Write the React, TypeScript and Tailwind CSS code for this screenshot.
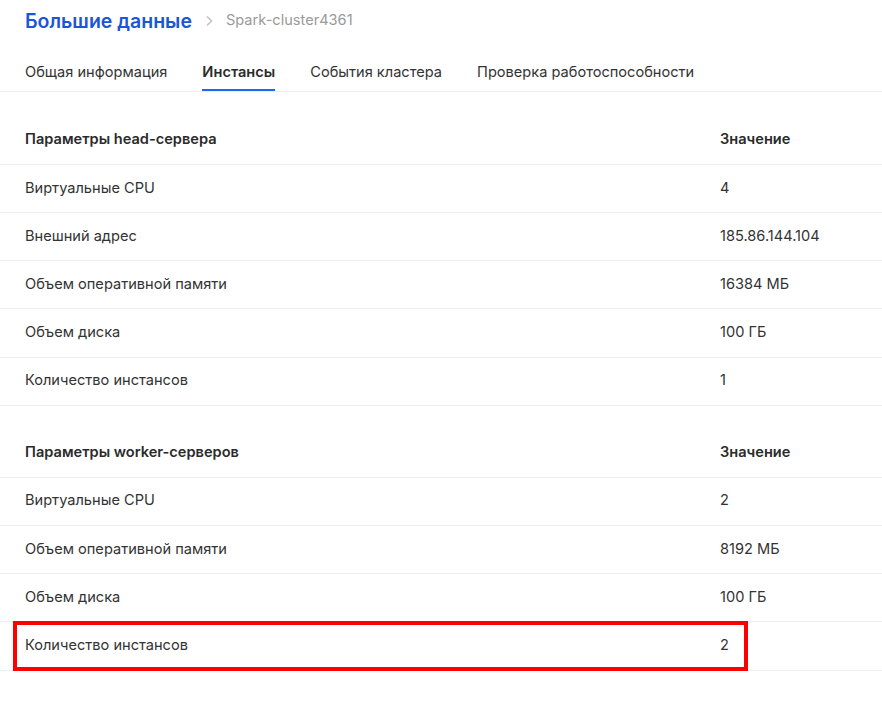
const headRows: ReadonlyArray<[string, string]> = [
  ["Виртуальные CPU", "4"],
  ["Внешний адрес", "185.86.144.104"],
  ["Объем оперативной памяти", "16384 МБ"],
  ["Объем диска", "100 ГБ"],
  ["Количество инстансов", "1"],
];

const workerRows: ReadonlyArray<[string, string]> = [
  ["Виртуальные CPU", "2"],
  ["Объем оперативной памяти", "8192 МБ"],
  ["Объем диска", "100 ГБ"],
  ["Количество инстансов", "2"],
];

const tabs = ["Общая информация", "Инстансы", "События кластера", "Проверка работоспособности"];

const ParamTable = ({ title, rows }: { title: string; rows: ReadonlyArray<[string, string]> }) => (
  <div className="flex flex-col">
    <div className="flex h-12 items-center border-b border-[#eeeef2] font-semibold text-[#2b2b2b]">
      <div className="w-[720px] pl-[25px]">{title}</div>
      <div className="flex-1">Значение</div>
    </div>
    {rows.map(([label, value]) => (
      <div key={label} className="flex h-[48.2px] items-center border-b border-[#eeeef2] text-[#333]">
        <div className="w-[720px] pl-[25px]">{label}</div>
        <div className="flex-1">{value}</div>
      </div>
    ))}
  </div>
);

const App = (): JSX.Element => {
  return (
    <div
      className="relative min-h-[713px] w-full bg-white text-[14.6px]"
      style={{ fontFamily: "Inter, 'Noto Sans', sans-serif" }}
    >
      <div className="flex items-center gap-3 px-[25px] pt-[7px]">
        <h1 className="text-[19.5px] font-semibold leading-[28px] text-[#1a56d6]">Большие данные</h1>
        <svg width="10" height="12" viewBox="0 0 10 12" className="text-[#c4c4c4]">
          <path d="M3 1.5 L7.5 6 L3 10.5" fill="none" stroke="currentColor" strokeWidth="1.6" />
        </svg>
        <span className="text-[14.6px] text-[#9a9a9a]">Spark-cluster4361</span>
      </div>

      <div className="mt-[27px] flex gap-[35px] border-b border-[#eeeef2] px-[25px]">
        {tabs.map((t) => (
          <div
            key={t}
            className={
              t === "Инстансы"
                ? "border-b-2 border-[#1f66f0] pb-[5px] font-semibold text-[#2b2b2b]"
                : "border-b-2 border-transparent pb-[5px] text-[#333]"
            }
          >
            {t}
          </div>
        ))}
      </div>

      <div className="mt-[25px]">
        <ParamTable title="Параметры head-сервера" rows={headRows} />
      </div>
      <div className="mt-[24px]">
        <ParamTable title="Параметры worker-серверов" rows={workerRows} />
      </div>

      <div className="absolute left-[13px] top-[621px] h-[50px] w-[735px] border-4 border-[#ff0000]" />
    </div>
  );
};

export default App;
